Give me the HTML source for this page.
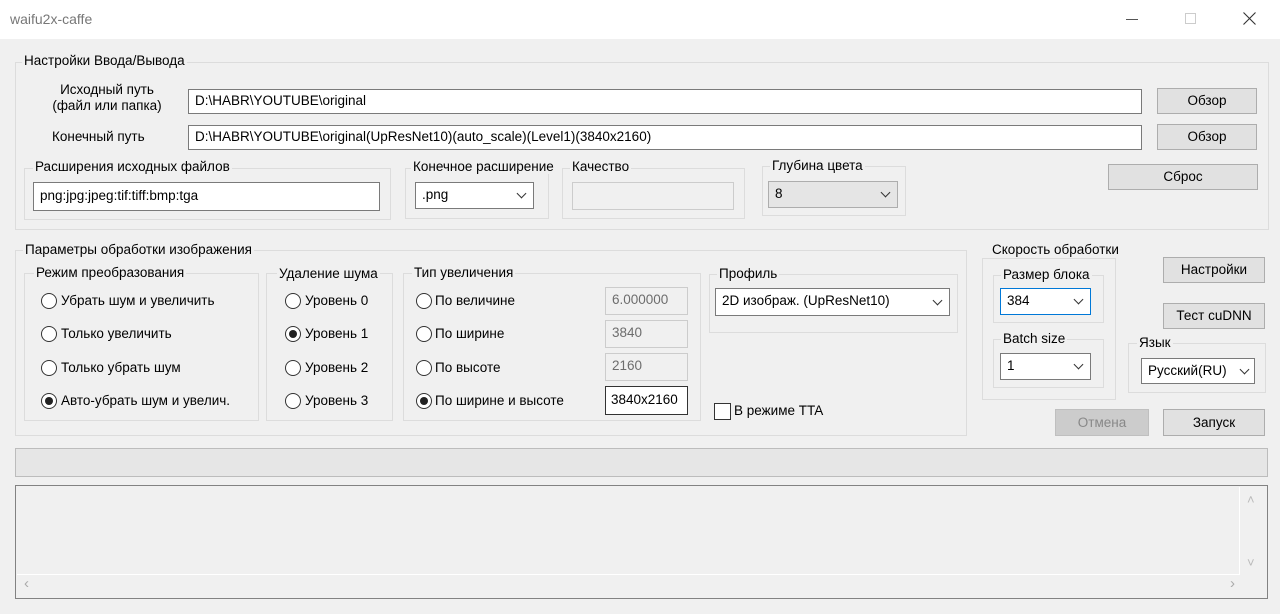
<!DOCTYPE html><html><head><meta charset="utf-8"><style>
*{box-sizing:border-box;margin:0;padding:0}
body{width:1280px;height:614px;background:#f0f0f0;font-family:"Liberation Sans","DejaVu Sans",sans-serif;font-size:13.5px;color:#000;position:relative;overflow:hidden}
div,span{position:absolute}
.tb{left:0;top:0;width:1280px;height:39px;background:#fff}
.g{border:1px solid #dcdcdc}
.l{background:#f0f0f0;padding:0 2px;white-space:nowrap}
.in{background:#fff;border:1px solid #7a7a7a;padding:3px 6px;white-space:nowrap;line-height:16px}
.dis{background:#f0f0f0;border:1px solid #ccc;color:#6d6d6d}
.btn{background:#e1e1e1;border:1px solid #adadad;text-align:center;line-height:23px}
.ar{right:8px;top:7px;width:7px;height:7px;border-right:1.2px solid #333;border-bottom:1.2px solid #333;transform:rotate(45deg)}
.r{width:16px;height:16px;border:1px solid #333;border-radius:50%;background:#fff}
.r.on::after{content:"";position:absolute;left:3px;top:3px;width:8px;height:8px;border-radius:50%;background:#222}
.t{white-space:nowrap}
</style></head><body>
<div class="tb"><span class="t" style="left:10px;top:11px;color:#777;font-size:14px">waifu2x-caffe</span>
<span style="left:1126px;top:19px;width:12px;border-top:1px solid #555"></span>
<span style="left:1185px;top:13px;width:11px;height:11px;border:1px solid #ccc"></span>
<svg style="position:absolute;left:1243px;top:12px" width="13" height="13"><path d="M0.5 0.5L12.5 12.5M12.5 0.5L0.5 12.5" stroke="#333" stroke-width="1.1"/></svg></div>

<div class="g" style="left:15px;top:62px;width:1254px;height:168px"></div>
<span class="l" style="left:22px;top:53px">Настройки Ввода/Вывода</span>
<span class="t" style="left:32px;top:82px;width:150px;text-align:center;line-height:16px">Исходный путь<br>(файл или папка)</span>
<span class="t" style="left:52px;top:129px">Конечный путь</span>
<div class="in" style="left:188px;top:89px;width:954px;height:25px">D:\HABR\YOUTUBE\original</div>
<div class="in" style="left:188px;top:125px;width:954px;height:25px">D:\HABR\YOUTUBE\original(UpResNet10)(auto_scale)(Level1)(3840x2160)</div>
<div class="btn" style="left:1157px;top:88px;width:100px;height:26px">Обзор</div>
<div class="btn" style="left:1157px;top:124px;width:100px;height:26px">Обзор</div>
<div class="btn" style="left:1108px;top:164px;width:150px;height:26px">Сброс</div>

<div class="g" style="left:24px;top:168px;width:367px;height:52px"></div>
<span class="l" style="left:33px;top:159px">Расширения исходных файлов</span>
<div class="in" style="left:33px;top:182px;width:347px;height:29px;padding-top:5px">png:jpg:jpeg:tif:tiff:bmp:tga</div>
<div class="g" style="left:405px;top:168px;width:144px;height:51px"></div>
<span class="l" style="left:411px;top:159px">Конечное расширение</span>
<div class="in" style="left:415px;top:182px;width:119px;height:27px;padding-top:4px">.png<span class="ar"></span></div>
<div class="g" style="left:562px;top:168px;width:183px;height:51px"></div>
<span class="l" style="left:570px;top:159px">Качество</span>
<div class="in dis" style="left:572px;top:182px;width:162px;height:28px"></div>
<div class="g" style="left:762px;top:166px;width:144px;height:50px"></div>
<span class="l" style="left:770px;top:158px">Глубина цвета</span>
<div class="in" style="left:768px;top:181px;width:130px;height:27px;background:#e5e5e5;border-color:#adadad;padding-top:4px">8<span class="ar"></span></div>

<div class="g" style="left:15px;top:250px;width:952px;height:186px"></div>
<span class="l" style="left:23px;top:242px">Параметры обработки изображения</span>
<div class="g" style="left:24px;top:273px;width:235px;height:148px"></div>
<span class="l" style="left:34px;top:265px">Режим преобразования</span>
<div class="g" style="left:266px;top:273px;width:127px;height:148px"></div>
<span class="l" style="left:277px;top:266px">Удаление шума</span>
<div class="g" style="left:403px;top:273px;width:298px;height:148px"></div>
<span class="l" style="left:412px;top:265px">Тип увеличения</span>

<div class="r" style="left:41px;top:293px"></div><span class="t" style="left:61px;top:293px">Убрать шум и увеличить</span>
<div class="r" style="left:41px;top:326px"></div><span class="t" style="left:61px;top:326px">Только увеличить</span>
<div class="r" style="left:41px;top:360px"></div><span class="t" style="left:61px;top:360px">Только убрать шум</span>
<div class="r on" style="left:41px;top:393px"></div><span class="t" style="left:61px;top:393px">Авто-убрать шум и увелич.</span>

<div class="r" style="left:285px;top:293px"></div><span class="t" style="left:305px;top:293px">Уровень 0</span>
<div class="r on" style="left:285px;top:326px"></div><span class="t" style="left:305px;top:326px">Уровень 1</span>
<div class="r" style="left:285px;top:360px"></div><span class="t" style="left:305px;top:360px">Уровень 2</span>
<div class="r" style="left:285px;top:393px"></div><span class="t" style="left:305px;top:393px">Уровень 3</span>

<div class="r" style="left:416px;top:293px"></div><span class="t" style="left:435px;top:293px">По величине</span>
<div class="r" style="left:416px;top:326px"></div><span class="t" style="left:435px;top:326px">По ширине</span>
<div class="r" style="left:416px;top:360px"></div><span class="t" style="left:435px;top:360px">По высоте</span>
<div class="r on" style="left:416px;top:393px"></div><span class="t" style="left:435px;top:393px">По ширине и высоте</span>
<div class="in dis" style="left:605px;top:287px;width:83px;height:28px;padding-top:4px">6.000000</div>
<div class="in dis" style="left:605px;top:320px;width:83px;height:28px;padding-top:4px">3840</div>
<div class="in dis" style="left:605px;top:353px;width:83px;height:28px;padding-top:4px">2160</div>
<div class="in" style="left:605px;top:386px;width:83px;height:29px;padding:5px 5px;border-color:#333">3840x2160</div>

<div class="g" style="left:709px;top:274px;width:249px;height:59px"></div>
<span class="l" style="left:717px;top:266px">Профиль</span>
<div class="in" style="left:715px;top:288px;width:235px;height:28px;padding-top:4px">2D изображ. (UpResNet10)<span class="ar" style="top:8px"></span></div>
<div style="left:714px;top:403px;width:17px;height:17px;border:1px solid #333;background:#fff"></div>
<span class="t" style="left:734px;top:403px">В режиме TTA</span>

<div class="g" style="left:982px;top:258px;width:134px;height:142px"></div>
<span class="l" style="left:990px;top:242px">Скорость обработки</span>
<div class="g" style="left:993px;top:275px;width:111px;height:48px"></div>
<span class="l" style="left:1001px;top:267px">Размер блока</span>
<div class="in" style="left:1000px;top:288px;width:91px;height:27px;border-color:#0078d7;padding-top:4px">384<span class="ar"></span></div>
<div class="g" style="left:993px;top:339px;width:111px;height:49px"></div>
<span class="l" style="left:1001px;top:331px">Batch size</span>
<div class="in" style="left:1000px;top:353px;width:91px;height:27px;padding-top:4px">1<span class="ar"></span></div>
<div class="g" style="left:1128px;top:343px;width:138px;height:50px"></div>
<span class="l" style="left:1137px;top:335px">Язык</span>
<div class="in" style="left:1141px;top:358px;width:114px;height:26px;padding-top:4px">Русский(RU)<span class="ar" style="right:6px"></span></div>
<div class="btn" style="left:1163px;top:257px;width:102px;height:26px">Настройки</div>
<div class="btn" style="left:1163px;top:303px;width:102px;height:26px">Тест cuDNN</div>
<div class="btn" style="left:1055px;top:409px;width:94px;height:27px;background:#ccc;border-color:#bfbfbf;color:#888;line-height:25px">Отмена</div>
<div class="btn" style="left:1163px;top:409px;width:102px;height:27px;line-height:25px">Запуск</div>

<div style="left:15px;top:448px;width:1253px;height:29px;background:#e6e6e6;border:1px solid #bcbcbc"></div>
<div style="left:15px;top:485px;width:1253px;height:114px;border:1px solid #828282;background:#f0f0f0"></div>
<div style="left:17px;top:574px;width:1222px;height:1px;background:#fff"></div>
<div style="left:1239px;top:487px;width:1px;height:88px;background:#fff"></div>
<span class="t" style="left:24px;top:575px;color:#aaa;font-size:15px">‹</span>
<span class="t" style="left:1230px;top:575px;color:#aaa;font-size:15px">›</span>
<span class="t" style="left:1247px;top:492px;color:#bbb;font-size:13px">˄</span>
<span class="t" style="left:1247px;top:555px;color:#bbb;font-size:13px">˅</span>
</body></html>
